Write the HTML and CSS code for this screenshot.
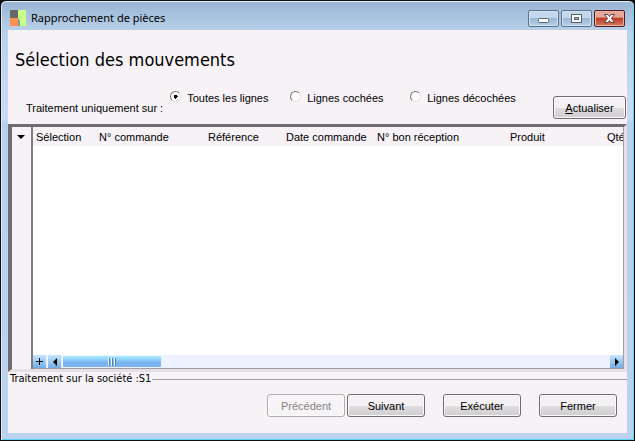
FILE: index.html
```html
<!DOCTYPE html>
<html lang="fr">
<head>
    <meta charset="UTF-8">
    <meta name="viewport" content="width=device-width, initial-scale=1.0">
    <title>Rapprochement de pièces</title>
    <link rel="stylesheet" href="styles.css">
</head>
<body>

<div class="window">
    <header class="titlebar">
        <svg class="app-icon" width="16" height="16" viewBox="0 0 16 16">
            <rect x="0" y="0" width="8" height="8" fill="#686868"/>
            <rect x="0" y="8" width="8" height="8" fill="#ff9153"/>
            <path d="M9 0H16V16H10V11L8 8V1Z" fill="#c9ff85"/>
            <path d="M8 8L10 11V16H8Z" fill="#7f9d94"/>
        </svg>
        <span class="title">Rapprochement de pièces</span>
        <div class="window-buttons">
            <button type="button" class="win-btn" aria-label="Réduire">
                <svg width="13" height="11" viewBox="0 0 13 11">
                    <rect x="1.5" y="5.5" width="10" height="4" rx="1" fill="#fff" stroke="#52606f"/>
                </svg>
            </button>
            <button type="button" class="win-btn" aria-label="Agrandir">
                <svg width="13" height="11" viewBox="0 0 13 11">
                    <rect x="1.5" y="1.5" width="10" height="8" fill="#fff" stroke="#52606f"/>
                    <rect x="4.5" y="4.5" width="4" height="2" fill="#9fb8d4" stroke="#52606f"/>
                </svg>
            </button>
            <button type="button" class="win-btn close" aria-label="Fermer la fenêtre">
                <svg width="13" height="11" viewBox="0 0 13 11">
                    <path d="M1.5 1.5H5L6.500 3.500L8 1.500H11.500L8.500 5.500L11.500 9.500H8L6.500 7.500L5 9.500H1.500L4.500 5.500Z" fill="#fff" stroke="#5e4248"/>
                </svg>
            </button>
        </div>
    </header>

    <main class="content">
        <h1>Sélection des mouvements</h1>

        <div class="filters">
            <span class="filter-label" id="filterLabel">Traitement uniquement sur :</span>
            <div class="radios" role="radiogroup" aria-labelledby="filterLabel">
                <label class="radio"><input type="radio" name="lignes" value="toutes" checked>Toutes les lignes</label>
                <label class="radio"><input type="radio" name="lignes" value="cochees">Lignes cochées</label>
                <label class="radio"><input type="radio" name="lignes" value="decochees">Lignes décochées</label>
            </div>
            <button type="button" class="btn refresh"><u>A</u>ctualiser</button>
        </div>

        <div class="grid">
            <div class="gutter">
                <button type="button" class="gutter-menu" aria-label="Menu de la grille">
                    <svg width="8" height="4" viewBox="0 0 8 4"><path d="M0 0H8L4 4Z" fill="#000"/></svg>
                </button>
            </div>
            <div class="grid-body">
                <div class="table-area">
                    <table>
                        <thead>
                            <tr>
                                <th class="col-selection">Sélection</th>
                                <th class="col-commande">N° commande</th>
                                <th class="col-reference">Référence</th>
                                <th class="col-date">Date commande</th>
                                <th class="col-bon">N° bon réception</th>
                                <th class="col-produit">Produit</th>
                                <th class="col-qte">Qté</th>
                            </tr>
                        </thead>
                        <tbody></tbody>
                    </table>
                </div>
                <div class="scrollbar">
                    <button type="button" class="scroll-btn" aria-label="Ajouter">
                        <svg width="7" height="7" viewBox="0 0 7 7"><path d="M3 0H4V3H7V4H4V7H3V4H0V3H3Z" fill="#000"/></svg>
                    </button>
                    <button type="button" class="scroll-btn" aria-label="Défiler à gauche">
                        <svg width="4" height="8" viewBox="0 0 4 8"><path d="M4 0V8L0 4Z" fill="#000"/></svg>
                    </button>
                    <div class="track">
                        <div class="thumb">
                            <svg width="8" height="8" viewBox="0 0 8 8">
                                <path d="M0 0H1V8H0ZM3 0H4V8H3ZM6 0H7V8H6Z" fill="#e6f5ff"/>
                                <path d="M1 0H2V8H1ZM4 0H5V8H4ZM7 0H8V8H7Z" fill="#5883ad"/>
                            </svg>
                        </div>
                    </div>
                    <button type="button" class="scroll-btn" aria-label="Défiler à droite">
                        <svg width="4" height="8" viewBox="0 0 4 8"><path d="M0 0V8L4 4Z" fill="#000"/></svg>
                    </button>
                </div>
            </div>
        </div>

        <fieldset class="actions">
            <legend>Traitement sur la société :S1</legend>
            <div class="action-row">
                <button type="button" class="btn" disabled>Précédent</button>
                <button type="button" class="btn next">Suivant</button>
                <button type="button" class="btn run">Exécuter</button>
                <button type="button" class="btn">Fermer</button>
            </div>
        </fieldset>
    </main>
</div>

</body>
</html>
```
FILE: styles.css
```css
* {
    box-sizing: border-box;
}
body {
    margin: 0;
    background-color: #101014;
    font-family: "Liberation Sans", Arial, sans-serif;
    font-size: 11px;
    line-height: 14px;
    color: #000;
}
button {
    font: inherit;
    color: inherit;
    padding: 0;
}
svg {
    display: block;
}

/* Window frame */
.window {
    display: flex;
    flex-direction: column;
    height: 100vh;
    min-height: 340px;
    padding: 0 7px 7px;
    border: 1px solid #101014;
    border-radius: 6px 6px 0 0;
    background: linear-gradient(#98b4d3, #b9d1ea 30px, #cbdcf2 118px, #b9d0ec 122px, #bcd2ed);
    box-shadow: inset 0 1px #e9f2fb, inset 1px 0 #dcecfa, inset -1px -1px #59d4f5;
}
.titlebar {
    display: flex;
    align-items: center;
    flex: none;
    height: 29px;
    padding: 5px 2px 0;
}
.title {
    margin-left: 5px;
    font-family: "Noto Sans", "Segoe UI", sans-serif;
    font-size: 11px;
}
.window-buttons {
    display: flex;
    gap: 2px;
    margin-left: auto;
}
.win-btn {
    display: flex;
    align-items: center;
    justify-content: center;
    width: 31px;
    height: 17px;
    border: 1px solid #59718c;
    border-radius: 2px;
    background: linear-gradient(#c5d7ea 45%, #9db8d5 50%, #b7cfe8);
    box-shadow: inset 0 0 0 1px #d3e3f3;
}
.win-btn.close {
    border-color: #541d25;
    background: linear-gradient(#e3a697 40%, #bf3c26 50%, #d37d60);
    box-shadow: inset 0 0 0 1px #e9b3a4;
}

/* Content */
.content {
    display: flex;
    flex-direction: column;
    flex: 1;
    min-height: 0;
    background-color: #f6f2f6;
}
h1 {
    margin: 18px 7px 0;
    font-family: "DejaVu Sans Condensed", Tahoma, sans-serif;
    font-size: 18px;
    font-weight: normal;
    line-height: 24px;
}
.filters {
    display: flex;
    align-items: flex-start;
    height: 52px;
    padding: 18px 1px 0 18px;
}
.filter-label {
    margin-top: 11px;
    white-space: nowrap;
}
.radios {
    display: grid;
    grid-template-columns: repeat(3, 120px);
    margin-left: 7px;
}
.radio {
    display: flex;
    align-items: center;
    gap: 6px;
    height: 14px;
    margin-top: 1px;
    white-space: nowrap;
}
.radio input {
    appearance: none;
    width: 11px;
    height: 11px;
    margin: 0 0 4px;
    border: 1px solid;
    border-color: #777 #e4e0e4 #e4e0e4 #777;
    border-radius: 50%;
    background-color: #fff;
}
.radio input:checked {
    background-image: radial-gradient(circle, #000 2px, transparent 2px);
}
.btn {
    width: 78px;
    height: 23px;
    border: 1px solid #706c70;
    border-radius: 3px;
    background: linear-gradient(#f3f1f3 50%, #dedcde 55%, #cfcdcf);
    box-shadow: inset 0 0 0 1px #fbfafb;
}
.btn:disabled {
    border-color: #b0aeb0;
    background: #f6f4f6;
    color: #858385;
}
.refresh {
    width: 73px;
    margin: 6px 0 0 auto;
}

/* Grid */
.grid {
    display: flex;
    flex: 1;
    min-height: 80px;
    border: solid #6f6b70;
    border-width: 3px 3px 3px 4px;
    border-right-color: #e6e0e6;
    border-bottom-color: #e6e0e6;
}
.gutter {
    width: 21px;
    border-right: 2px solid #817d82;
}
.gutter-menu {
    display: flex;
    align-items: center;
    justify-content: center;
    width: 17px;
    height: 19px;
    border: 0;
    background: none;
}
.grid-body {
    display: flex;
    flex-direction: column;
    flex: 1;
    min-width: 0;
    border-right: 1px solid #a39da3;
    border-bottom: 1px solid #a39da3;
    background-color: #fff;
}
.table-area {
    flex: 1;
    overflow: hidden;
    background: linear-gradient(#f6f2f6, #f6f2f6) top / 100% 19px no-repeat;
}
table {
    width: 100%;
    table-layout: fixed;
    border-collapse: collapse;
}
th {
    height: 19px;
    padding: 0 0 0 3px;
    font-weight: normal;
    text-align: left;
    white-space: nowrap;
    overflow: hidden;
}
.col-selection {
    width: 63px;
}
.col-commande {
    width: 109px;
}
.col-reference {
    width: 78px;
}
.col-date {
    width: 91px;
}
.col-bon {
    width: 133px;
}
.col-produit {
    width: 97px;
}

/* Scrollbar */
.scrollbar {
    display: flex;
    flex: none;
    gap: 2px;
    height: 13px;
    background-color: #eef2ff;
}
.scroll-btn {
    display: flex;
    align-items: center;
    justify-content: center;
    width: 13px;
    border: 0;
    background: linear-gradient(#c4e6ff, #71ade3);
}
.track {
    flex: 1;
    padding: 1px 0;
}
.thumb {
    display: flex;
    align-items: center;
    justify-content: center;
    width: 98px;
    height: 11px;
    border-radius: 1px;
    background: linear-gradient(#a9eeff, #7ab4f2 60%, #80b5ee);
}

/* Bottom actions */
.actions {
    flex: none;
    min-width: 0;
    margin: 0;
    padding: 8px 0 16px;
    border: 0 solid #a09ca0;
    border-top-width: 1px;
}
legend {
    padding: 0 1px 0 2px;
    font-family: "DejaVu Sans Condensed", Tahoma, sans-serif;
    font-size: 11px;
}
.action-row {
    display: flex;
    justify-content: flex-end;
    padding: 0 10px;
}
.next {
    margin-left: 2px;
}
.run {
    margin: 0 18px;
}
```
